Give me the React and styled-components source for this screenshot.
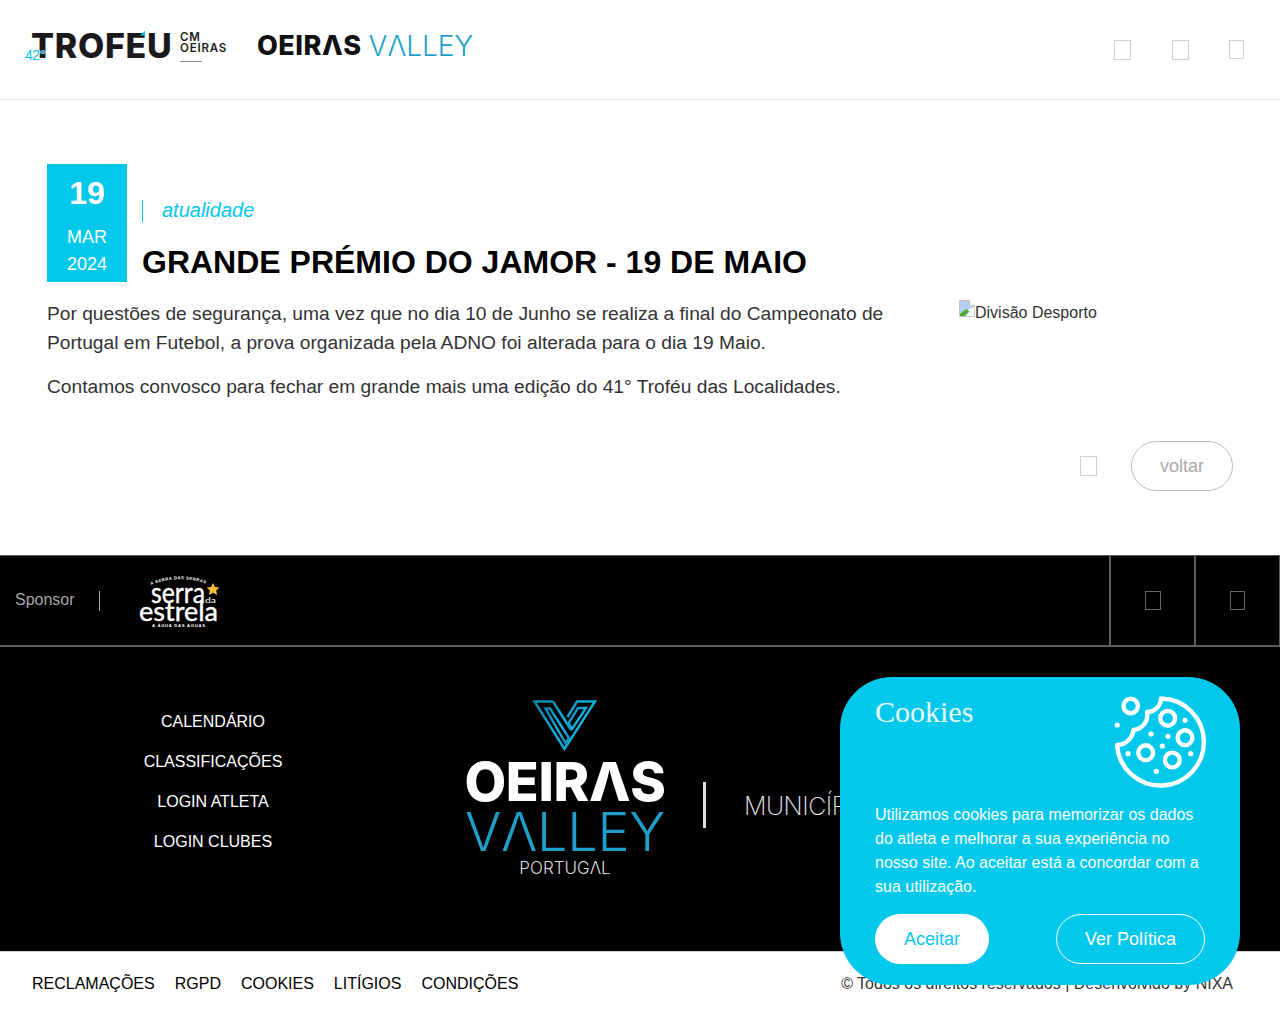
import React from "react";
import styled, { createGlobalStyle } from "styled-components";

const CYAN = "#02c9ec";
const SANS = '"Liberation Sans", Arial, sans-serif';
const BRAND = 'Inter, "Liberation Sans", sans-serif';

const Global = createGlobalStyle`
  html, body { margin: 0; padding: 0; background: #fff; }
  body { font-family: ${SANS}; color: #222; }
  * { box-sizing: border-box; }
`;

const Page = styled.div`
  width: 1280px;
  min-height: 1024px;
  display: flex;
  flex-direction: column;
`;

const Header = styled.header`
  height: 100px;
  border-bottom: 1px solid #e2e2e2;
  display: flex;
  align-items: center;
  justify-content: space-between;
  padding: 0 36px 0 25px;
`;

const Logos = styled.div`
  display: flex;
  align-items: center;
  gap: 30px;
  margin-top: -8px;
`;

const TrofeuLogo = styled.div`
  position: relative;
  width: 202px;
  height: 38px;
  display: flex;
  align-items: center;
  padding-left: 6px;
`;

const TrofeuWord = styled.span`
  font-family: ${BRAND};
  font-weight: 800;
  font-size: 34px;
  letter-spacing: 0.7px;
  line-height: 26px;
  color: #1b191c;
`;

const TrofeuAccent = styled.span`
  position: absolute;
  left: 115px;
  top: 4px;
  width: 5px;
  height: 5px;
  background: ${CYAN};
  clip-path: polygon(100% 0, 100% 100%, 0 100%);
`;

const Edition = styled.span`
  position: absolute;
  left: 0;
  bottom: 3px;
  font-family: ${SANS};
  font-size: 14px;
  line-height: 14px;
  letter-spacing: -0.5px;
  color: #06c4f2;
  text-shadow: 1px 0 0 #fff;
`;

const CityStack = styled.div`
  position: absolute;
  left: 155px;
  top: 5px;
  width: 48px;
  font-family: ${BRAND};
  font-weight: 600;
  font-size: 11.5px;
  line-height: 11.5px;
  letter-spacing: 0.8px;
  color: #222;
`;

const CityRule = styled.div`
  width: 22px;
  height: 1px;
  background: #8d8d8d;
  margin-top: 6px;
`;

const ValleyLogo = styled.div`
  display: flex;
  align-items: center;
  gap: 7px;
  width: 216px;
`;

const OeirasWord = styled.span`
  font-family: ${BRAND};
  font-weight: 800;
  font-size: ${(p) => p.$size}px;
  line-height: 1;
  letter-spacing: ${(p) => p.$track || 0}px;
  margin-top: ${(p) => p.$top || 0}px;
  color: ${(p) => p.$color};
`;

const ValleyWord = styled.span`
  font-family: ${BRAND};
  font-weight: 300;
  font-size: ${(p) => p.$size}px;
  line-height: 1;
  letter-spacing: ${(p) => p.$track || 0}px;
  margin-top: ${(p) => p.$top || 0}px;
  color: #1f9fc8;
`;

const IconRow = styled.div`
  display: flex;
  align-items: center;
  gap: 40.5px;
`;

const Tofu = styled.span`
  display: block;
  flex: none;
  width: ${(p) => p.$w || 17}px;
  height: ${(p) => p.$h || 20}px;
  border: 1px solid ${(p) => p.$color || "#d0d0d0"};
`;

const Main = styled.main`
  height: 455px;
  padding: 64px 47px 0;
  display: flex;
  flex-direction: column;
`;

const ArticleHead = styled.div`
  display: flex;
  gap: 15px;
`;

const DateBox = styled.div`
  width: 80px;
  height: 118px;
  background: ${CYAN};
  color: #fff;
  display: flex;
  flex-direction: column;
  align-items: center;
  padding-top: 9px;
`;

const Day = styled.div`
  font-size: 32px;
  line-height: 40px;
  font-weight: 700;
`;

const MonthLine = styled.div`
  font-size: 18px;
  line-height: 27px;
  margin-top: ${(p) => p.$top || 0}px;
`;

const HeadText = styled.div`
  display: flex;
  flex-direction: column;
  padding-top: 36px;
`;

const Category = styled.div`
  border-left: 1px solid ${CYAN};
  height: 22px;
  padding-left: 19px;
  font-size: 20px;
  line-height: 20px;
  font-style: italic;
  color: ${CYAN};
`;

const Title = styled.h1`
  margin: 20px 0 0;
  font-size: 32px;
  line-height: 40px;
  font-weight: 700;
  color: #000;
`;

const ArticleBody = styled.div`
  display: flex;
  justify-content: space-between;
  margin-top: 17px;
`;

const Copy = styled.div`
  width: 860px;
`;

const Paragraph = styled.p`
  margin: 0 0 15px;
  font-size: 19.2px;
  line-height: 29px;
  color: #333;
`;

const BrokenImage = styled.div`
  width: 274px;
  display: flex;
  align-items: flex-start;
  padding-top: 1px;
  font-size: 16px;
  line-height: 26px;
  color: #333;
`;

const BrokenGlyph = styled.svg`
  flex: none;
  width: 16px;
  height: 17px;
`;

const Actions = styled.div`
  display: flex;
  justify-content: flex-end;
  align-items: center;
  gap: 34px;
  margin-top: 25px;
`;

const BackButton = styled.button`
  width: 102px;
  height: 50px;
  border: 1px solid #bdbdbd;
  border-radius: 25px;
  background: #fff;
  color: #a9a9a9;
  font-family: ${SANS};
  font-size: 18px;
`;

const SponsorBar = styled.section`
  height: 92px;
  background: #000;
  border-top: 1px solid #5d5d5d;
  border-bottom: 2px solid #5d5d5d;
  display: flex;
  align-items: stretch;
`;

const SponsorInfo = styled.div`
  flex: 1;
  display: flex;
  align-items: center;
  padding-left: 15px;
`;

const SponsorLabel = styled.span`
  font-size: 16px;
  color: #a6a6a6;
  width: 85px;
  height: 20px;
  line-height: 18px;
  border-right: 1px solid #a6a6a6;
`;

const SerraLogo = styled.svg`
  width: 100px;
  height: 60px;
  margin-left: 29px;
`;

const SponsorCell = styled.div`
  width: ${(p) => p.$w}px;
  border-left: 2px solid #5d5d5d;
  border-right: ${(p) => (p.$last ? "1px solid #5d5d5d" : "0")};
  display: flex;
  align-items: center;
  justify-content: center;
`;

const Footer = styled.footer`
  height: 304px;
  background: #000;
  display: flex;
  color: #fff;
`;

const FooterNav = styled.nav`
  width: 426px;
  padding-top: 55px;
  display: flex;
  flex-direction: column;
  align-items: center;
`;

const FooterLink = styled.a`
  font-size: 16px;
  line-height: 40px;
  color: #fff;
`;

const BrandColumn = styled.div`
  width: 200px;
  margin-left: 39px;
  padding-top: 48px;
  display: flex;
  flex-direction: column;
  align-items: center;
`;

const VMark = styled.svg`
  width: 80px;
  height: 60px;
  flex: none;
`;

const PortugalWord = styled.span`
  font-family: ${BRAND};
  font-weight: 300;
  font-size: 17px;
  line-height: 20px;
  margin-top: -1px;
  color: #ddd;
`;

const Divider = styled.div`
  width: 3px;
  height: 46px;
  background: #ddd;
  margin: 135px 0 0 38px;
  flex: none;
`;

const Municipio = styled.div`
  margin: 144px 0 0 38px;
  font-family: ${BRAND};
  font-weight: 200;
  font-size: 25px;
  line-height: 30px;
  letter-spacing: -0.5px;
  color: #e8e8e8;
`;

const BottomBar = styled.div`
  flex: 1;
  min-height: 73px;
  border-top: 1px solid #c9c9c9;
  display: flex;
  justify-content: space-between;
  align-items: flex-start;
  padding: 22px 47px 0 32px;
  font-size: 16px;
  line-height: 20px;
  color: #000;
`;

const LegalLinks = styled.div`
  display: flex;
  gap: 20px;
`;

const Credit = styled.span`
  color: #333;
`;

const CookieBanner = styled.aside`
  position: fixed;
  left: 840px;
  top: 677px;
  width: 400px;
  height: 308px;
  border-radius: 52px;
  background: ${CYAN};
  color: #fff;
  padding: 0 35px;
  display: flex;
  flex-direction: column;
`;

const CookieHead = styled.div`
  display: flex;
  justify-content: space-between;
  height: 126px;
`;

const CookieTitle = styled.h2`
  margin: 17px 0 0;
  font-family: "Liberation Serif", serif;
  font-weight: 400;
  font-size: 30px;
  line-height: 36px;
  color: #eafaff;
`;

const CookieGlyph = styled.svg`
  width: 150px;
  height: 120px;
  margin: 3px -35px 0 0;
  flex: none;
`;

const CookieText = styled.p`
  margin: 0;
  font-size: 16px;
  line-height: 24px;
  height: 111px;
`;

const CookieActions = styled.div`
  display: flex;
  justify-content: space-between;
`;

const CookieButton = styled.button`
  height: 50px;
  width: ${(p) => p.$w}px;
  border-radius: 25px;
  font-family: ${SANS};
  font-size: 18px;
  border: 1px solid #fff;
  background: ${(p) => (p.$solid ? "#fff" : "transparent")};
  color: ${(p) => (p.$solid ? CYAN : "#fff")};
`;

const CookieIcon = () => (
  <CookieGlyph viewBox="0 0 150 120" aria-hidden="true">
    <g fill="none" stroke="#fff" strokeWidth="4.4" strokeLinejoin="round">
      <path d="M71 18.5 A43.5 43.5 0 1 1 27 65 A17 17 0 0 0 43.5 50 A15 15 0 0 0 57 32 A14 14 0 0 0 71 18.5 Z" />
      <circle cx="40.7" cy="26" r="7.2" />
      <circle cx="77.7" cy="38.3" r="7.4" />
      <circle cx="95" cy="57.7" r="7.4" />
      <circle cx="55.7" cy="72.7" r="7.4" />
      <circle cx="82.3" cy="80" r="7.4" />
    </g>
    <g fill="#fff">
      {[
        [27.3, 45],
        [95, 40.3],
        [61, 54],
        [78, 56.3],
        [72.3, 66],
        [38, 73.7],
        [100.7, 73.7],
        [66.3, 91.3],
      ].map(([x, y]) => (
        <circle key={`${x}-${y}`} cx={x} cy={y} r="2.6" />
      ))}
    </g>
  </CookieGlyph>
);

const ValleyMark = () => (
  <VMark viewBox="0 0 80 60" aria-hidden="true">
    <defs>
      <linearGradient id="vgrad" x1="0" y1="0" x2="1" y2="1">
        <stop offset="0" stopColor="#0c86ad" />
        <stop offset="0.6" stopColor="#13b4e2" />
        <stop offset="1" stopColor="#0d8fb9" />
      </linearGradient>
    </defs>
    <g fill="none" stroke="url(#vgrad)" strokeWidth="2.4" strokeLinejoin="miter">
      <path d="M28 6.5 H9.5 L39.5 54 L70 6.5 H52 L42.5 22" />
      <path d="M28 6.5 L46 35" />
      <path d="M20.5 13.5 H25 L44 43 L40.5 48 Z" />
      <path d="M53 13 H61 L47 34 L43.5 28 Z" />
    </g>
  </VMark>
);

const SerraMark = () => (
  <SerraLogo viewBox="0 0 100 60" role="img">
    <defs>
      <path id="serra-arc" d="M22 14 Q50 3 78 13" fill="none" />
    </defs>
    <text fontFamily="Liberation Sans, sans-serif" fontSize="4.2" fontWeight="700" fill="#fff" letterSpacing="0.5">
      <textPath href="#serra-arc">A SERRA DAS SERRAS</textPath>
    </text>
    <text x="22" y="32" fontFamily="Lato, sans-serif" fontSize="28" fill="#fff" stroke="#fff" strokeWidth="0.4" textLength="54" lengthAdjust="spacingAndGlyphs">serra</text>
    <text x="76" y="32" fontFamily="Lato, sans-serif" fontSize="8" fill="#fff" textLength="11" lengthAdjust="spacingAndGlyphs">da</text>
    <text x="10" y="50" fontFamily="Lato, sans-serif" fontSize="26" fill="#fff" stroke="#fff" strokeWidth="0.4" textLength="79" lengthAdjust="spacingAndGlyphs">estrela</text>
    <text x="23" y="56" fontFamily="Liberation Sans, sans-serif" fontSize="4.2" fontWeight="700" fill="#fff" textLength="53">A ÁGUA DAS ÁGUAS</text>
    <path d="M84 12 l2 4 4.5 .6 -3.3 3 .9 4.4 -4.1-2.2 -4 2.2 .8-4.4 -3.2-3 4.5-.6 Z" fill="#f2c230" />
  </SerraLogo>
);

export default function App() {
  return (
    <Page>
      <Global />
      <Header>
        <Logos>
          <TrofeuLogo>
            <TrofeuWord>TROFEU</TrofeuWord>
            <TrofeuAccent />
            <Edition>42°</Edition>
            <CityStack>
              CM
              <br />
              OEIRAS
              <CityRule />
            </CityStack>
          </TrofeuLogo>
          <ValleyLogo>
            <OeirasWord $size={27} $track={0.5} $color="#111">OEIRΛS</OeirasWord>
            <ValleyWord $size={28} $track={0}>VΛLLEY</ValleyWord>
          </ValleyLogo>
        </Logos>
        <IconRow>
          <Tofu />
          <Tofu />
          <Tofu $w={15} $h={19} />
        </IconRow>
      </Header>

      <Main>
        <ArticleHead>
          <DateBox>
            <Day>19</Day>
            <MonthLine $top={11}>MAR</MonthLine>
            <MonthLine>2024</MonthLine>
          </DateBox>
          <HeadText>
            <Category>atualidade</Category>
            <Title>GRANDE PRÉMIO DO JAMOR - 19 DE MAIO</Title>
          </HeadText>
        </ArticleHead>
        <ArticleBody>
          <Copy>
            <Paragraph>
              Por questões de segurança, uma vez que no dia 10 de Junho se realiza a final do Campeonato de Portugal em Futebol, a prova organizada pela ADNO foi alterada para o dia 19 Maio.
            </Paragraph>
            <Paragraph>
              Contamos convosco para fechar em grande mais uma edição do 41° Troféu das Localidades.
            </Paragraph>
          </Copy>
          <BrokenImage>
            <BrokenGlyph viewBox="0 0 16 17" aria-hidden="true">
              <path d="M.5 .5 H10.5 L15.5 5.5 V16.5 H.5 Z" fill="#fff" stroke="#c4c4c4" />
              <path d="M1 1 H10 V6 H15 V7 L1 13 Z" fill="#b6cff5" />
              <path d="M1 16 V13.5 L7.5 9 L10.5 11.5 L6 16 Z" fill="#4faa3c" />
              <path d="M10.5 .5 V5.5 H15.5" fill="#fff" stroke="#c4c4c4" />
            </BrokenGlyph>
            Divisão Desporto
          </BrokenImage>
        </ArticleBody>
        <Actions>
          <Tofu $w={17} $h={20} />
          <BackButton>voltar</BackButton>
        </Actions>
      </Main>

      <SponsorBar>
        <SponsorInfo>
          <SponsorLabel>Sponsor</SponsorLabel>
          <SerraMark />
        </SponsorInfo>
        <SponsorCell $w={85}>
          <Tofu $w={16} $h={19} $color="#666" />
        </SponsorCell>
        <SponsorCell $w={86} $last>
          <Tofu $w={15} $h={19} $color="#666" />
        </SponsorCell>
      </SponsorBar>

      <Footer>
        <FooterNav>
          <FooterLink>CALENDÁRIO</FooterLink>
          <FooterLink>CLASSIFICAÇÕES</FooterLink>
          <FooterLink>LOGIN ATLETA</FooterLink>
          <FooterLink>LOGIN CLUBES</FooterLink>
        </FooterNav>
        <BrandColumn>
          <ValleyMark />
          <OeirasWord $size={54} $top={0} $track={-0.3} $color="#fff">OEIRΛS</OeirasWord>
          <ValleyWord $size={54} $top={-4} $track={-0.3}>VΛLLEY</ValleyWord>
          <PortugalWord>PORTUGΛL</PortugalWord>
        </BrandColumn>
        <Divider />
        <Municipio>MUNICÍPIO</Municipio>
      </Footer>

      <BottomBar>
        <LegalLinks>
          <span>RECLAMAÇÕES</span>
          <span>RGPD</span>
          <span>COOKIES</span>
          <span>LITÍGIOS</span>
          <span>CONDIÇÕES</span>
        </LegalLinks>
        <Credit>© Todos os direitos reservados | Desenvolvido by NIXA</Credit>
      </BottomBar>

      <CookieBanner>
        <CookieHead>
          <CookieTitle>Cookies</CookieTitle>
          <CookieIcon />
        </CookieHead>
        <CookieText>
          Utilizamos cookies para memorizar os dados do atleta e melhorar a sua experiência no nosso site. Ao aceitar está a concordar com a sua utilização.
        </CookieText>
        <CookieActions>
          <CookieButton $solid $w={114}>Aceitar</CookieButton>
          <CookieButton $w={149}>Ver Política</CookieButton>
        </CookieActions>
      </CookieBanner>
    </Page>
  );
}
